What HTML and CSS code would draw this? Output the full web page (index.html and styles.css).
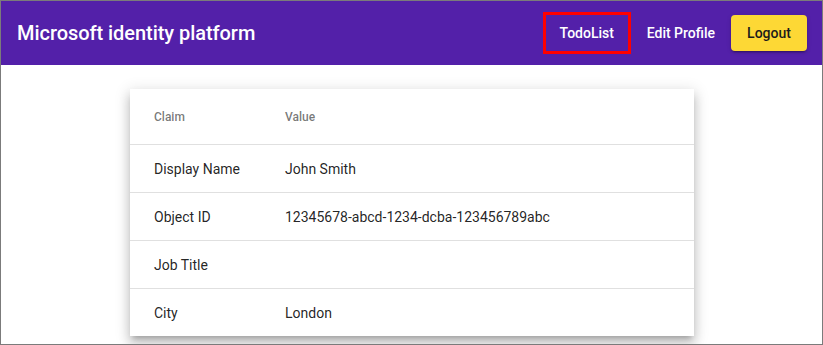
FILE: index.html
```html
<!DOCTYPE html>
<html>
<head>
<meta charset="utf-8">
<link rel="stylesheet" href="styles.css">
</head>
<body>
<div class="frame">
  <header class="toolbar">
    <span class="title">Microsoft identity platform</span>
    <span class="spacer"></span>
    <nav class="nav">
      <a class="btn btn-flat btn-marked">TodoList</a>
      <a class="btn btn-flat">Edit Profile</a>
      <a class="btn btn-raised">Logout</a>
    </nav>
  </header>
  <main class="content">
    <table class="claims">
      <thead>
        <tr><th class="col-claim">Claim</th><th>Value</th></tr>
      </thead>
      <tbody>
        <tr><td class="col-claim">Display Name</td><td>John Smith</td></tr>
        <tr><td class="col-claim">Object ID</td><td>12345678-abcd-1234-dcba-123456789abc</td></tr>
        <tr><td class="col-claim">Job Title</td><td></td></tr>
        <tr><td class="col-claim">City</td><td>London</td></tr>
      </tbody>
    </table>
  </main>
</div>
</body>
</html>
```

FILE: styles.css
```css
html, body {
  margin: 0;
  padding: 0;
  background: #ffffff;
}
.frame {
  width: 823px;
  height: 345px;
  box-sizing: border-box;
  border: 1px solid #7b7b7b;
  overflow: hidden;
  font-family: Roboto, "Helvetica Neue", sans-serif;
  background: #fff;
}
.toolbar {
  height: 64px;
  background: #5320a9;
  color: #fff;
  display: flex;
  align-items: center;
  padding: 0 15px 0 16px;
}
.title {
  font-size: 20px;
  font-weight: 500;
  letter-spacing: -0.05px;
}
.spacer { flex: 1; }
.nav {
  display: flex;
  align-items: center;
}
.btn {
  display: inline-flex;
  align-items: center;
  justify-content: center;
  height: 36px;
  min-width: 64px;
  padding: 0 16px;
  box-sizing: border-box;
  font-size: 14px;
  font-weight: 500;
  border-radius: 4px;
  cursor: pointer;
}
.btn-flat { color: #fff; }
.btn-marked {
  height: 42px;
  padding: 0 16px;
  border: 3px solid #ff0000;
  border-radius: 0;
  width: 88px;
}
.btn-raised {
  background: #fdd835;
  color: #1b1b1b;
  width: 76px;
  box-shadow: 0 3px 1px -2px rgba(0,0,0,.2), 0 2px 2px 0 rgba(0,0,0,.14), 0 1px 5px 0 rgba(0,0,0,.12);
}
.content {
  padding-top: 24px;
  display: flex;
  justify-content: center;
}
.claims {
  width: 564px;
  margin-left: 1px;
  border-collapse: collapse;
  background: #fff;
  box-shadow: 0 5px 5px -3px rgba(0,0,0,.2), 0 8px 10px 1px rgba(0,0,0,.14), 0 3px 14px 2px rgba(0,0,0,.12);
}
.claims th, .claims td {
  text-align: left;
  padding: 0;
  border-bottom: 1px solid #e0e0e0;
}
.claims tbody tr:last-child td { border-bottom: none; }
.claims th {
  height: 55px;
  font-size: 12px;
  font-weight: 500;
  color: rgba(0,0,0,.54);
}
.claims td {
  height: 47px;
  font-size: 14px;
  color: rgba(0,0,0,.87);
}
.claims .col-claim {
  width: 131px;
  padding-left: 24px;
}
```
